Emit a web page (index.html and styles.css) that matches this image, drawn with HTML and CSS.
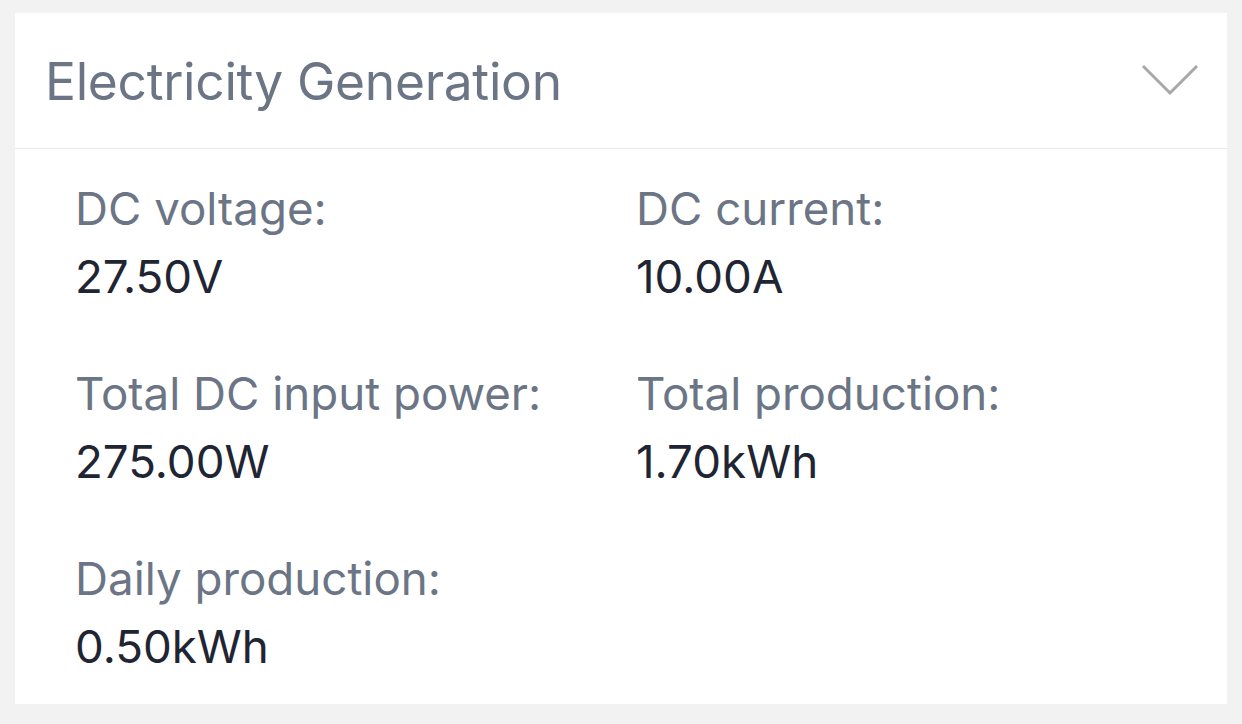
FILE: index.html
```html
<!DOCTYPE html>
<html>
<head>
<meta charset="utf-8">
<link rel="stylesheet" href="styles.css">
</head>
<body>
<div class="card">
  <div class="header">
    <div class="title">Electricity Generation</div>
    <svg class="chevron" width="58" height="34" viewBox="0 0 58 34"><polyline points="2,3 29,30 56,3" fill="none" stroke="#a8a8a8" stroke-width="3"/></svg>
  </div>
  <div class="grid">
    <div class="item"><div class="label">DC voltage:</div><div class="value">27.50V</div></div>
    <div class="item"><div class="label">DC current:</div><div class="value">10.00A</div></div>
    <div class="item"><div class="label">Total DC input power:</div><div class="value">275.00W</div></div>
    <div class="item"><div class="label">Total production:</div><div class="value">1.70kWh</div></div>
    <div class="item"><div class="label">Daily production:</div><div class="value">0.50kWh</div></div>
  </div>
</div>
</body>
</html>
```
FILE: styles.css
```css
html, body { margin: 0; padding: 0; }
body {
  background: #f2f2f2;
  font-family: Inter, "Noto Sans", sans-serif;
  padding: 13px 15px 20px 15px;
  width: 1242px;
  height: 724px;
  box-sizing: border-box;
}
.card {
  background: #fff;
  height: 691px;
}
.header {
  height: 135px;
  border-bottom: 1px solid #e8e8e8;
  display: flex;
  align-items: center;
  justify-content: space-between;
  padding: 0 28px 0 30px;
}
.title {
  font-size: 51.5px;
  color: #6b7585;
  letter-spacing: -0.3px;
}
.chevron { margin-top: -2px; }
.grid {
  display: grid;
  grid-template-columns: 561px 1fr;
  padding: 28px 0 0 60px;
  row-gap: 53px;
}
.label {
  font-size: 45.7px;
  color: #6b7585;
  line-height: 64px;
}
.value {
  font-size: 45.7px;
  color: #1f2533;
  line-height: 64px;
  margin-top: 4px;
}
```
